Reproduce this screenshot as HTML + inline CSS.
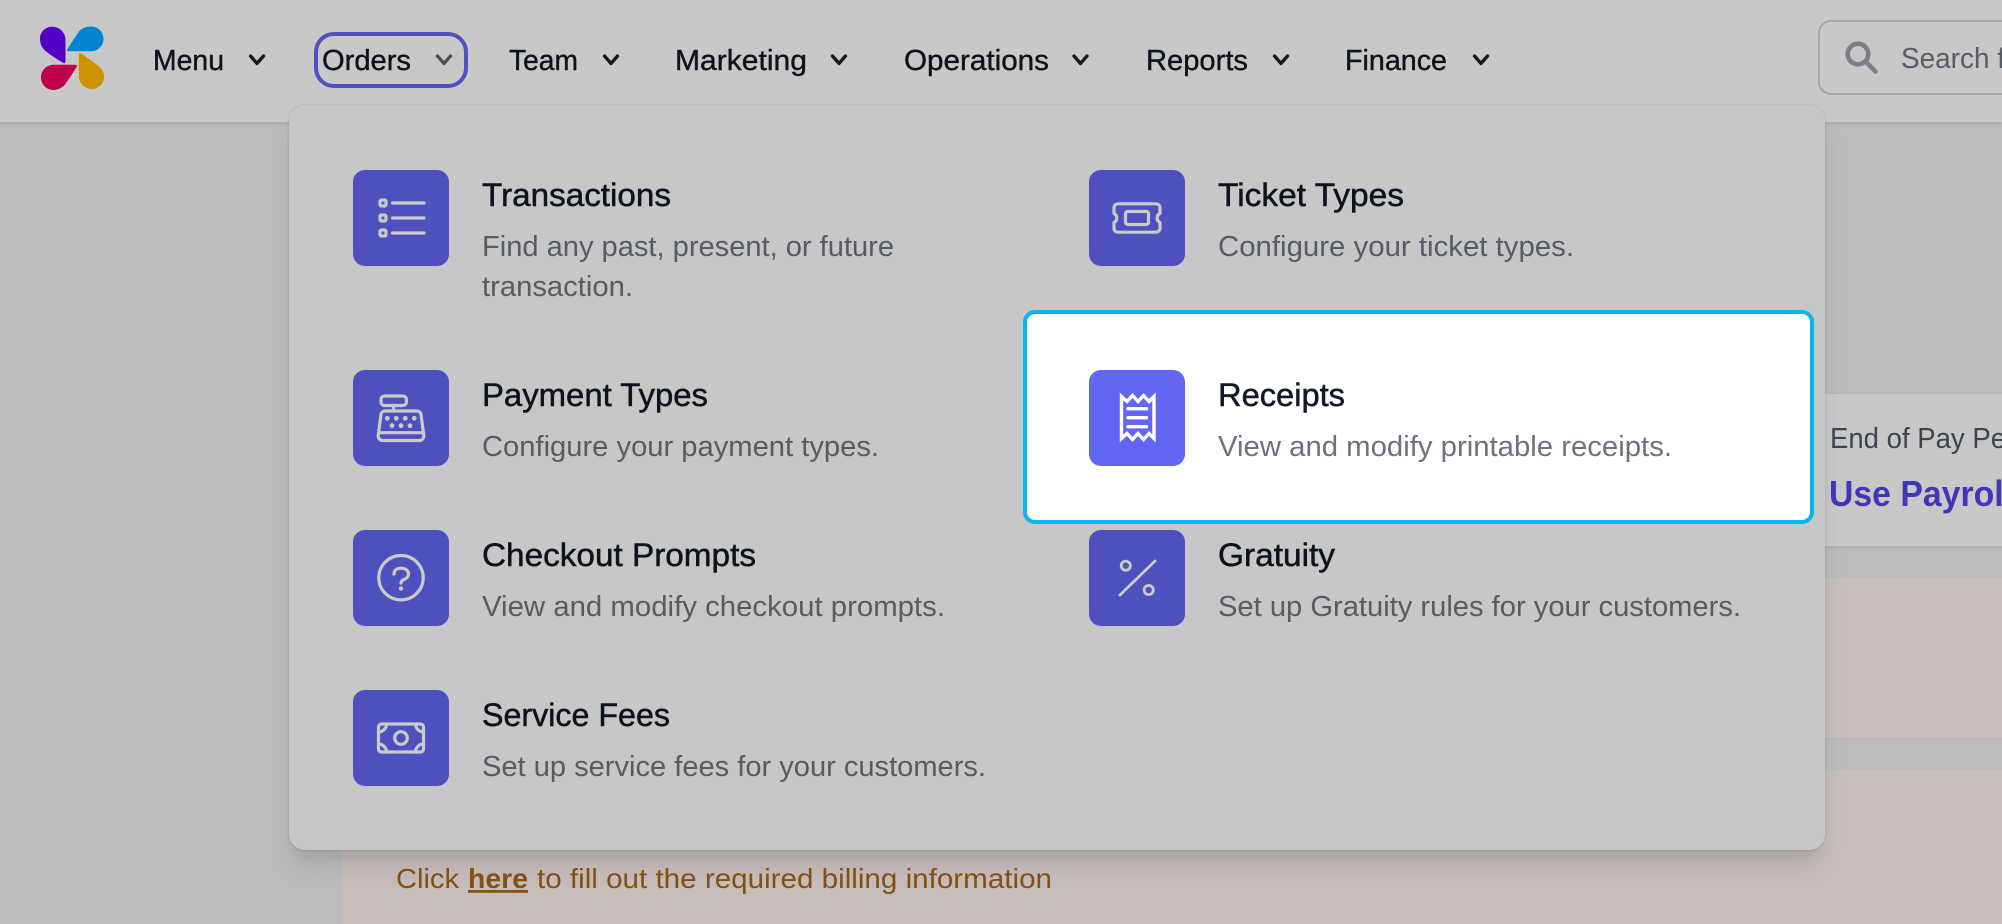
<!DOCTYPE html>
<html lang="en">
<head>
<meta charset="utf-8">
<title>Orders menu</title>
<style>
html,body{margin:0;padding:0;width:2002px;height:924px;overflow:hidden;background:#bbbbbd}
.a{position:absolute;box-sizing:border-box}
svg{position:absolute;left:0;top:0}
text{font-family:"Liberation Sans",sans-serif}
.n{font-size:28.5px;fill:#0d131e;stroke:#0d131e;stroke-width:.4px}
.t{font-size:32.5px;fill:#0d131e;stroke:#0d131e;stroke-width:.5px}
.d{font-size:28.5px;fill:#565b65}
.ic{fill:none;stroke:#cacaca;stroke-width:3.2;stroke-linecap:round;stroke-linejoin:round}
.ch{fill:none;stroke:#141924;stroke-width:3.3;stroke-linecap:round;stroke-linejoin:round}
</style>
</head>
<body>
<div class="a" style="left:341px;top:578px;width:1661px;height:160px;background:#c6bdbb;box-shadow:0 1px 3px rgba(0,0,0,.03)"></div>
<div class="a" style="left:341px;top:770px;width:1661px;height:154px;background:#c6bdbb"></div>
<div class="a" style="left:1700px;top:394px;width:302px;height:152px;background:#c8c8c8;box-shadow:0 1px 3px rgba(0,0,0,.1)"></div>
<div class="a" style="left:0;top:0;width:2002px;height:122px;background:#c8c8c8;box-shadow:0 1px 4px rgba(0,0,0,.13)"></div>
<div class="a" style="left:1818px;top:20px;width:240px;height:75px;border:2.5px solid #a3a6ac;border-radius:13px;background:#c8c8c8"></div>
<div class="a" style="left:314px;top:32px;width:154px;height:56px;border:4px solid #4f52be;border-radius:20px"></div>
<div class="a" style="left:289px;top:105px;width:1536px;height:745px;background:#c7c7c7;border-radius:16px;box-shadow:0 0 0 1.5px rgba(0,0,0,.045),0 20px 25px -5px rgba(0,0,0,.1),0 10px 10px -5px rgba(0,0,0,.05)"></div>
<div class="a" style="left:1023px;top:310px;width:791px;height:214px;background:#fff;border:4px solid #07b5ee;border-radius:12px"></div>
<div class="a" style="left:353px;top:170px;width:96px;height:96px;background:#4e50bd;border-radius:12px"></div>
<div class="a" style="left:1089px;top:170px;width:96px;height:96px;background:#4e50bd;border-radius:12px"></div>
<div class="a" style="left:353px;top:370px;width:96px;height:96px;background:#4e50bd;border-radius:12px"></div>
<div class="a" style="left:1089px;top:370px;width:96px;height:96px;background:#6366f1;border-radius:12px"></div>
<div class="a" style="left:353px;top:530px;width:96px;height:96px;background:#4e50bd;border-radius:12px"></div>
<div class="a" style="left:1089px;top:530px;width:96px;height:96px;background:#4e50bd;border-radius:12px"></div>
<div class="a" style="left:353px;top:690px;width:96px;height:96px;background:#4e50bd;border-radius:12px"></div>

<svg width="2002" height="924" viewBox="0 0 2002 924" xmlns="http://www.w3.org/2000/svg">
  <!-- logo -->
  <path fill="#5300c7" d="M65.500 61.500C65.500 63 64.300 63.500 63 62.700Q52 56.500 45 50.500C41.500 47.500 40 43 40 38.500C40 32 45.500 26.800 52.200 26.800C59.500 26.800 65.500 32.500 65.500 40Z"/>
  <path fill="#0085cf" d="M68.500 51.300C67.200 51.300 66.700 50 67.400 49Q73 40 79 31.500C82 28 86.500 26.500 91 26.500C98 26.500 103.500 32 103.500 38.800C103.500 45.800 98 51.300 91 51.300Z"/>
  <path fill="#bf004e" d="M75.500 64.800C76.800 64.800 77.300 66 76.600 67Q71 76 65 84.500C62 88 57.500 90 53.500 90C46.500 90 41 84.500 41 77.400C41 70.400 46.500 64.800 53.500 64.800Z"/>
  <path fill="#cc9200" d="M78.800 55C78.800 53.300 80 52.800 81.300 53.500Q91 60 99 66.500C102.500 69.500 104 72.500 104 77C104 83.500 98.500 89 92 89C85 89 78.800 83.500 78.800 76Z"/>

  <!-- nav -->
  <text class="n" x="153" y="70" textLength="71" lengthAdjust="spacingAndGlyphs">Menu</text>
  <text class="n" x="322" y="70" textLength="89" lengthAdjust="spacingAndGlyphs">Orders</text>
  <text class="n" x="509" y="70" textLength="69" lengthAdjust="spacingAndGlyphs">Team</text>
  <text class="n" x="675" y="70" textLength="132" lengthAdjust="spacingAndGlyphs">Marketing</text>
  <text class="n" x="904" y="70" textLength="145" lengthAdjust="spacingAndGlyphs">Operations</text>
  <text class="n" x="1146" y="70" textLength="102" lengthAdjust="spacingAndGlyphs">Reports</text>
  <text class="n" x="1345" y="70" textLength="102" lengthAdjust="spacingAndGlyphs">Finance</text>
  <path class="ch" d="M250.500 56l6.500 7.500 6.500-7.500"/>
  <path class="ch" style="stroke:#4b505c" d="M437.500 56l6.500 7.500 6.500-7.500"/>
  <path class="ch" d="M604.500 56l6.500 7.500 6.500-7.500"/>
  <path class="ch" d="M832.500 56l6.500 7.500 6.500-7.500"/>
  <path class="ch" d="M1074 56l6.500 7.500 6.500-7.500"/>
  <path class="ch" d="M1274.500 56l6.500 7.500 6.500-7.500"/>
  <path class="ch" d="M1474.500 56l6.500 7.500 6.500-7.500"/>

  <!-- search -->
  <circle cx="1858" cy="54" r="10.300" fill="none" stroke="#7b8088" stroke-width="4.600"/>
  <path d="M1866 62l9.500 9.500" fill="none" stroke="#7b8088" stroke-width="4.600" stroke-linecap="round"/>
  <text x="1901" y="68" font-size="28.500" fill="#575c66" textLength="104" lengthAdjust="spacingAndGlyphs">Search f</text>

  <!-- right card -->
  <text x="1830" y="448" font-size="28.500" fill="#3c444f" textLength="176" lengthAdjust="spacingAndGlyphs">End of Pay Pe</text>
  <text x="1829" y="506" font-size="36" font-weight="700" fill="#4036b6" textLength="184" lengthAdjust="spacingAndGlyphs">Use Payroll</text>

  <!-- item text -->
  <text class="t" x="482" y="206" textLength="189" lengthAdjust="spacingAndGlyphs">Transactions</text>
  <text class="d" x="482" y="256" textLength="412" lengthAdjust="spacingAndGlyphs">Find any past, present, or future</text>
  <text class="d" x="482" y="296" textLength="151" lengthAdjust="spacingAndGlyphs">transaction.</text>

  <text class="t" x="1218" y="206" textLength="186" lengthAdjust="spacingAndGlyphs">Ticket Types</text>
  <text class="d" x="1218" y="256" textLength="356" lengthAdjust="spacingAndGlyphs">Configure your ticket types.</text>

  <text class="t" x="482" y="406" textLength="226" lengthAdjust="spacingAndGlyphs">Payment Types</text>
  <text class="d" x="482" y="456" textLength="397" lengthAdjust="spacingAndGlyphs">Configure your payment types.</text>

  <text class="t" style="fill:#111827;stroke:#111827" x="1218" y="406" textLength="127" lengthAdjust="spacingAndGlyphs">Receipts</text>
  <text class="d" style="fill:#6b7280" x="1218" y="456" textLength="454" lengthAdjust="spacingAndGlyphs">View and modify printable receipts.</text>

  <text class="t" x="482" y="566" textLength="274" lengthAdjust="spacingAndGlyphs">Checkout Prompts</text>
  <text class="d" x="482" y="616" textLength="463" lengthAdjust="spacingAndGlyphs">View and modify checkout prompts.</text>

  <text class="t" x="1218" y="566" textLength="117" lengthAdjust="spacingAndGlyphs">Gratuity</text>
  <text class="d" x="1218" y="616" textLength="523" lengthAdjust="spacingAndGlyphs">Set up Gratuity rules for your customers.</text>

  <text class="t" x="482" y="726" textLength="188" lengthAdjust="spacingAndGlyphs">Service Fees</text>
  <text class="d" x="482" y="776" textLength="504" lengthAdjust="spacingAndGlyphs">Set up service fees for your customers.</text>

  <!-- billing line -->
  <text x="396" y="888" font-size="28" fill="#84500f" textLength="63" lengthAdjust="spacingAndGlyphs">Click</text>
  <text x="468" y="888" font-size="28" font-weight="700" fill="#84500f" text-decoration="underline" textLength="60" lengthAdjust="spacingAndGlyphs">here</text>
  <text x="537" y="888" font-size="28" fill="#84500f" textLength="515" lengthAdjust="spacingAndGlyphs">to fill out the required billing information</text>

  <!-- list icon -->
  <g class="ic" transform="translate(353 170)">
    <rect x="27" y="30" width="6" height="6" rx="1.500"/>
    <rect x="27" y="45" width="6" height="6" rx="1.500"/>
    <rect x="27" y="60" width="6" height="6" rx="1.500"/>
    <path d="M39.500 33H71M39.500 48H71M39.500 63H71"/>
  </g>
  <!-- ticket icon -->
  <g class="ic" transform="translate(1089 170)">
    <path d="M29 33.800H67a4 4 0 0 1 4 4V43.500a5 5 0 0 0 0 9V58.200a4 4 0 0 1-4 4H29a4 4 0 0 1-4-4V52.500a5 5 0 0 0 0-9V37.800a4 4 0 0 1 4-4Z"/>
    <rect x="36.500" y="41.500" width="23" height="13" rx="2"/>
  </g>
  <!-- cash register icon -->
  <g class="ic" transform="translate(353 370)">
    <rect x="28" y="26" width="25.500" height="9.500" rx="3.500"/>
    <path d="M40.500 35.500V41"/>
    <path d="M32 41H64a4 4 0 0 1 4 3.500L70.800 65.500a4.500 4.500 0 0 1-4.500 5H29.700a4.500 4.500 0 0 1-4.500-5L28 44.500a4 4 0 0 1 4-3.500Z"/>
    <path d="M25.500 62.700H70.500"/>
    <g fill="#cacaca" stroke="none">
      <circle cx="34.300" cy="48.300" r="2.400"/><circle cx="43.300" cy="48.300" r="2.400"/><circle cx="52.300" cy="48.300" r="2.400"/><circle cx="61.300" cy="48.300" r="2.400"/>
      <circle cx="39" cy="55.700" r="2.400"/><circle cx="48" cy="55.700" r="2.400"/><circle cx="57" cy="55.700" r="2.400"/>
    </g>
  </g>
  <!-- receipt icon -->
  <g class="ic" style="stroke:#fff;stroke-width:3.400;stroke-linecap:butt;stroke-linejoin:miter" transform="translate(1089 370)">
    <path d="M32.500 26.500V68.500L38 63.500L43.500 69.500L49 63.500L54.500 69.500L60 63.500L65 68.500V26.500L60 31.500L54.500 25.500L49 31.500L43.500 25.500L38 31.500Z"/>
    <path stroke-linecap="round" d="M39 38.700H57.500M39 47.700H57.500M39 56.700H57.500"/>
  </g>
  <!-- question icon -->
  <g class="ic" transform="translate(353 530)">
    <circle cx="48" cy="47.700" r="22.200"/>
    <path d="M41 44C41 40 44 38.200 48 38.200C52.500 38.200 55.500 40.700 55.500 44C55.500 47 53.500 48.500 51 49.500C49 50.400 48 51.200 48 53"/>
    <circle cx="48" cy="58.500" r="2.200" fill="#cacaca" stroke="none"/>
  </g>
  <!-- percent icon -->
  <g class="ic" style="stroke-width:2.800" transform="translate(1089 530)">
    <path d="M66 31L31 65"/>
    <circle cx="36.800" cy="35.700" r="4.600"/>
    <circle cx="59.700" cy="60" r="4.600"/>
  </g>
  <!-- cash icon -->
  <g class="ic" transform="translate(353 690)">
    <rect x="25.500" y="34" width="45" height="28" rx="3"/>
    <circle cx="48" cy="48" r="6.300"/>
    <path d="M25.500 42a8 8 0 0 0 8-8M62.500 34a8 8 0 0 0 8 8M70.500 54a8 8 0 0 0-8 8M33.500 62a8 8 0 0 0-8-8"/>
  </g>
</svg>
</body>
</html>
